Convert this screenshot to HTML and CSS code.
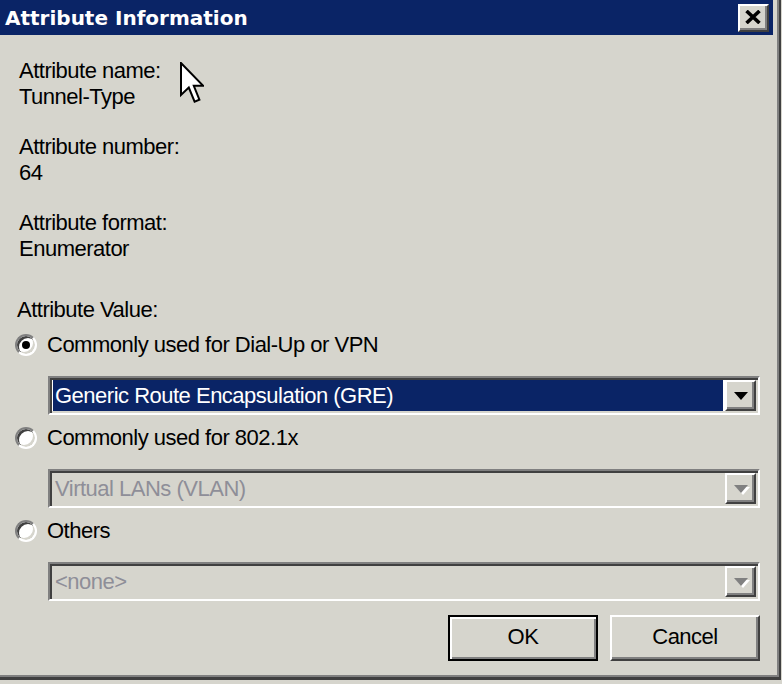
FILE: index.html
```html
<!DOCTYPE html>
<html lang="en">

<head>
    <meta charset="UTF-8">
    <meta name="viewport" content="width=device-width, initial-scale=1.0">
    <title>Attribute Information</title>
    <link rel="stylesheet" href="styles.css">
</head>

<body>
    <div class="window">
        <div class="frame">
            <div class="titlebar">
                <span class="title">Attribute Information</span>
                <button class="close">
                    <svg width="16" height="14" viewBox="0 0 16 14"><path d="M1.5 1L14.5 13M14.5 1L1.5 13" stroke="#000" stroke-width="3.6"/></svg>
                </button>
            </div>
            <div class="content">
                <div class="field">
                    <div>Attribute name:</div>
                    <div>Tunnel-Type</div>
                </div>
                <div class="field">
                    <div>Attribute number:</div>
                    <div>64</div>
                </div>
                <div class="field">
                    <div>Attribute format:</div>
                    <div>Enumerator</div>
                </div>

                <div class="value-label">Attribute Value:</div>

                <label class="radio-row"><span class="radio checked"></span>Commonly used for Dial-Up or VPN</label>
                <div class="combo">
                    <span class="combo-text selected">Generic Route Encapsulation (GRE)</span>
                    <span class="combo-btn"><span class="arrow"></span></span>
                </div>

                <label class="radio-row"><span class="radio"></span>Commonly used for 802.1x</label>
                <div class="combo disabled">
                    <span class="combo-text">Virtual LANs (VLAN)</span>
                    <span class="combo-btn"><span class="arrow"></span></span>
                </div>

                <label class="radio-row"><span class="radio"></span>Others</label>
                <div class="combo disabled">
                    <span class="combo-text">&lt;none&gt;</span>
                    <span class="combo-btn"><span class="arrow"></span></span>
                </div>

                <div class="actions">
                    <button class="btn btn-default">OK</button>
                    <button class="btn">Cancel</button>
                </div>
            </div>
        </div>
    </div>

    <svg class="cursor" width="24" height="42" viewBox="0 0 12 21">
        <path d="M0.5 0.5V16.5L4.4 12.8L7.3 19.8L9.7 18.8L6.9 11.9H11.6Z" fill="#fff" stroke="#000" stroke-width="1" stroke-linejoin="miter"/>
    </svg>
</body>

</html>
```

FILE: styles.css
```css
body {
    position: relative;
    width: 782px;
    height: 684px;
    margin: 0;
    overflow: hidden;
    background-color: #d6d5cd;
    font-family: "Liberation Sans", Arial, sans-serif;
    font-size: 22px;
    letter-spacing: -0.5px;
    color: #000;
}

.window {
    width: 781px;
    height: 680px;
    box-sizing: border-box;
    border-right: 2px solid #404040;
    border-bottom: 3px solid #404040;
}

.frame {
    height: 100%;
    box-sizing: border-box;
    padding-right: 4px;
    border-right: 2px solid #808080;
    border-bottom: 2px solid #808080;
}

.titlebar {
    display: flex;
    align-items: center;
    justify-content: space-between;
    height: 35px;
    padding: 0 4px 0 5px;
    background-color: #0a2466;
}

.title {
    font-family: "DejaVu Sans", Verdana, sans-serif;
    font-size: 20px;
    font-weight: bold;
    letter-spacing: 0;
    color: #fff;
}

.close {
    display: flex;
    align-items: center;
    justify-content: center;
    width: 31px;
    height: 28px;
    padding: 0 1px 1px 0;
    box-sizing: border-box;
    border: 2px solid;
    border-color: #fff #404040 #404040 #fff;
    background-color: #d6d5cd;
    box-shadow: inset -2px -2px 0 #808080;
}

.content {
    padding: 23px 13px 0 0;
    line-height: 26px;
}

.field {
    padding-left: 19px;
}

.field+.field {
    margin-top: 24px;
}

.value-label {
    margin-top: 35px;
    padding-left: 17px;
}

.radio-row {
    display: flex;
    align-items: center;
    gap: 10px;
    height: 26px;
    margin-top: 10px;
    padding-left: 15px;
}

.value-label+.radio-row {
    margin-top: 9px;
}

.radio {
    position: relative;
    width: 22px;
    height: 22px;
    box-sizing: border-box;
    border: 2px solid;
    border-color: #808080 #fff #fff #808080;
    border-radius: 50%;
    background-color: #fff;
    box-shadow: inset 2px 2px 0 #404040, inset -2px -2px 0 #d6d5cd;
}

.radio.checked::after {
    content: '';
    position: absolute;
    top: 5px;
    left: 5px;
    width: 8px;
    height: 8px;
    border-radius: 50%;
    background-color: #000;
}

.combo {
    display: flex;
    height: 39px;
    margin: 18px 0 0 48px;
    padding: 2px;
    box-sizing: border-box;
    border: 2px solid;
    border-color: #808080 #fff #fff #808080;
    background-color: #fff;
    box-shadow: inset 2px 2px 0 #404040, inset -2px -2px 0 #d6d5cd;
    line-height: 31px;
}

.combo-text {
    flex: 1;
    margin: 0 2px 0 1px;
    padding-left: 2px;
    white-space: nowrap;
}

.combo-text.selected {
    background-color: #0a2466;
    color: #fff;
}

.combo.disabled {
    background-color: #d6d5cd;
}

.combo.disabled .combo-text {
    color: #8e8e98;
}

.combo-btn {
    display: flex;
    align-items: center;
    justify-content: center;
    width: 31px;
    box-sizing: border-box;
    border: 2px solid;
    border-color: #fff #404040 #404040 #fff;
    background-color: #d6d5cd;
    box-shadow: inset -2px -2px 0 #808080;
}

.arrow {
    width: 0;
    height: 0;
    margin-top: 1px;
    border-top: 8px solid #000;
    border-left: 7px solid transparent;
    border-right: 7px solid transparent;
}

.combo.disabled .arrow {
    border-top-color: #808080;
    filter: drop-shadow(2px 2px 0 #fff);
}

.actions {
    display: flex;
    justify-content: flex-end;
    gap: 12px;
    margin-top: 14px;
}

.btn {
    width: 150px;
    height: 46px;
    padding: 0 0 3px;
    box-sizing: border-box;
    border: 2px solid;
    border-color: #fff #404040 #404040 #fff;
    background-color: #d6d5cd;
    box-shadow: inset -2px -2px 0 #808080;
    font: inherit;
    letter-spacing: inherit;
    color: #000;
}

.btn-default {
    border-color: #000;
    box-shadow: inset 2px 2px 0 #fff, inset -2px -2px 0 #808080;
}

.cursor {
    position: absolute;
    top: 62px;
    left: 180px;
}
```
